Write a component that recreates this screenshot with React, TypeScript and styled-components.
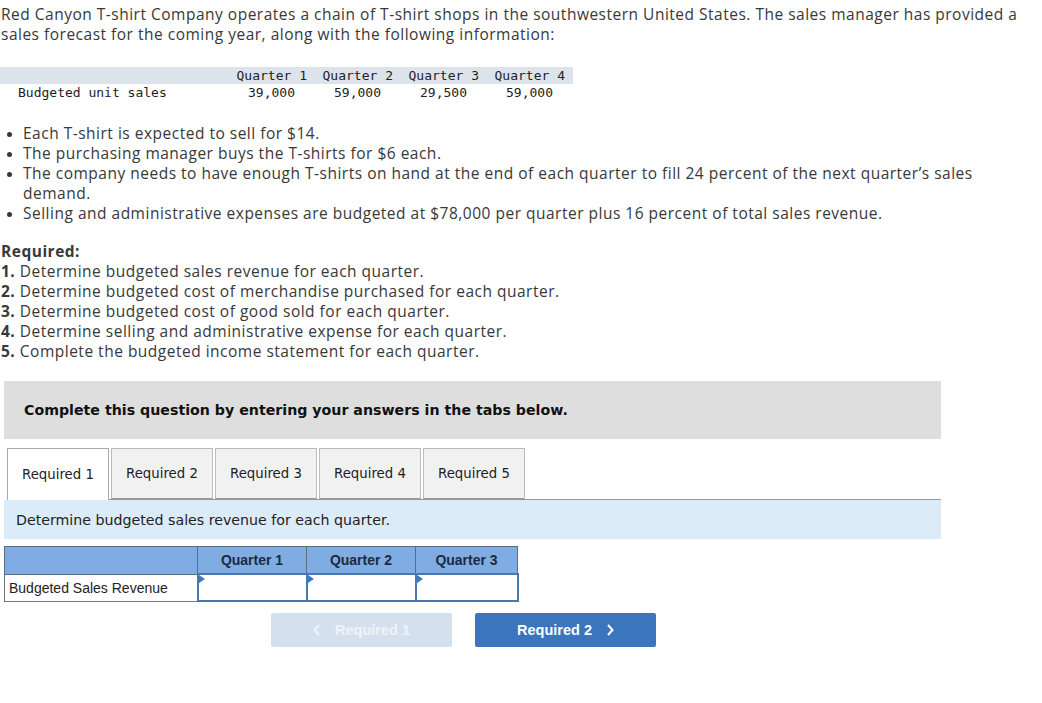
import React from "react";
import styled, { createGlobalStyle } from "styled-components";

const Global = createGlobalStyle`
  html, body { margin: 0; padding: 0; background: #fff; }
  body { font-family: "Open Sans", Lato, sans-serif; color: #333; }
`;

const Page = styled.div`
  width: 1042px;
  padding: 4px 0 0 0;
`;

const Body = styled.div`
  font-family: "Open Sans", sans-serif;
  font-size: 15.5px;
  letter-spacing: 0.5px;
  line-height: 20px;
  color: #383838;
  width: 1026px;
`;

const Intro = styled.p`
  margin: 0 0 0 1px;
`;

const DataTable = styled.table`
  margin-top: 23px;
  border-collapse: collapse;
  font-family: "DejaVu Sans Mono", monospace;
  font-size: 13px;
  letter-spacing: 0;
  color: #222;
`;

const HeadRow = styled.tr`
  background: #dde3ea;
`;

const Cell = styled.td<{ $w: number; $left?: boolean; $pr?: number }>`
  width: ${(p) => p.$w}px;
  padding: 0 ${(p) => p.$pr ?? 8}px 0 ${(p) => (p.$left ? 18 : 0)}px;
  height: 17px;
  line-height: 17px;
  text-align: ${(p) => (p.$left ? "left" : "right")};
  white-space: nowrap;
  box-sizing: border-box;
`;

const Bullets = styled.ul`
  margin: 22px 0 0 0;
  padding: 0 0 0 23px;
  li { margin: 0; }
  li::marker { font-size: 13px; }
`;

const Required = styled.div`
  margin-top: 18px;
  padding-left: 1px;
`;

const ReqTitle = styled.div`
  font-weight: 700;
`;

const ReqItem = styled.div`
  b { font-weight: 700; }
`;

const Instruction = styled.div`
  margin: 20px 0 0 4px;
  width: 937px;
  height: 58px;
  background: #dedede;
  display: flex;
  align-items: center;
  padding-left: 20px;
  box-sizing: border-box;
  font-family: "DejaVu Sans", Verdana, sans-serif;
  font-weight: 700;
  font-size: 14.2px;
  color: #111;
`;

const TabBar = styled.div`
  margin: 9px 0 0 7px;
  display: flex;
  width: 934px;
  border-bottom: 1px solid #999;
  height: 51px;
`;

const Tab = styled.div<{ $active?: boolean }>`
  width: 102px;
  height: ${(p) => (p.$active ? 52 : 51)}px;
  box-sizing: border-box;
  margin-right: 2px;
  display: flex;
  align-items: center;
  justify-content: center;
  font-family: "DejaVu Sans", Verdana, sans-serif;
  font-size: 13.3px;
  color: #222;
  border: 1px solid ${(p) => (p.$active ? "#aaa" : "#bbb")};
  border-bottom: ${(p) => (p.$active ? "none" : "1px solid #999")};
  background: ${(p) => (p.$active ? "#fff" : "#f1f1f1")};
  margin-bottom: ${(p) => (p.$active ? -1 : 0)}px;
`;

const Prompt = styled.div`
  margin-left: 4px;
  width: 937px;
  height: 39px;
  background: #dcebf8;
  display: flex;
  align-items: center;
  padding-left: 12px;
  box-sizing: border-box;
  font-family: "DejaVu Sans", Verdana, sans-serif;
  font-size: 14.2px;
  color: #222;
`;

const AnswerTable = styled.table`
  margin: 7px 0 0 4px;
  border-collapse: collapse;
  font-family: "Liberation Sans", Arial, sans-serif;
  font-size: 14px;
  color: #222;
`;

const AHead = styled.th<{ $w: number }>`
  width: ${(p) => p.$w}px;
  height: 26px;
  background: #7fade3;
  border: 1px solid #5d6d80;
  font-weight: 700;
  color: #1b2a40;
  padding: 0;
`;

const ALabel = styled.td`
  height: 26px;
  border: 1px solid #777;
  padding: 0 4px;
  text-align: left;
`;

const AInputCell = styled.td`
  border: 2px solid #4a77b0;
  padding: 0;
  position: relative;
  background: #fff;
`;

const Marker = styled.span`
  position: absolute;
  top: 0;
  left: 0;
  width: 0;
  height: 0;
  border-top: 4px solid transparent;
  border-bottom: 4px solid transparent;
  border-left: 6px solid #3a78c3;
`;

const NavRow = styled.div`
  margin: 11px 0 0 271px;
  display: flex;
  gap: 23px;
`;

const NavButton = styled.div<{ $primary?: boolean }>`
  width: 181px;
  height: 34px;
  border-radius: 2px;
  display: flex;
  align-items: center;
  justify-content: center;
  gap: 14px;
  font-family: "Liberation Sans", Arial, sans-serif;
  font-weight: 700;
  font-size: 14.5px;
  color: ${(p) => (p.$primary ? "#fff" : "#eef3f9")};
  background: ${(p) => (p.$primary ? "#3a75bd" : "#d5e0ef")};
  svg { display: block; }
`;

const Chevron = ({ dir }: { dir: "l" | "r" }) => (
  <svg width="8" height="12" viewBox="0 0 8 12">
    <path
      d={dir === "l" ? "M6 1 L1.5 6 L6 11" : "M2 1 L6.5 6 L2 11"}
      fill="none"
      stroke="currentColor"
      strokeWidth="2"
    />
  </svg>
);

export default function App() {
  const quarters = ["Quarter 1", "Quarter 2", "Quarter 3", "Quarter 4"];
  const units = ["39,000", "59,000", "29,500", "59,000"];
  return (
    <Page>
      <Global />
      <Body>
        <Intro>
          Red Canyon T-shirt Company operates a chain of T-shirt shops in the southwestern United States. The sales
          manager has provided a sales forecast for the coming year, along with the following information:
        </Intro>
        <DataTable>
          <tbody>
            <HeadRow>
              <Cell $w={229} $left />
              {quarters.map((q) => (
                <Cell key={q} $w={86}>
                  {q}
                </Cell>
              ))}
            </HeadRow>
            <tr>
              <Cell $w={229} $left>
                Budgeted unit sales
              </Cell>
              {units.map((u, i) => (
                <Cell key={i} $w={86} $pr={20}>
                  {u}
                </Cell>
              ))}
            </tr>
          </tbody>
        </DataTable>
        <Bullets>
          <li>Each T-shirt is expected to sell for $14.</li>
          <li>The purchasing manager buys the T-shirts for $6 each.</li>
          <li>
            The company needs to have enough T-shirts on hand at the end of each quarter to fill 24 percent of the
            next quarter’s sales demand.
          </li>
          <li>
            Selling and administrative expenses are budgeted at $78,000 per quarter plus 16 percent of total sales
            revenue.
          </li>
        </Bullets>
        <Required>
          <ReqTitle>Required:</ReqTitle>
          <ReqItem>
            <b>1.</b> Determine budgeted sales revenue for each quarter.
          </ReqItem>
          <ReqItem>
            <b>2.</b> Determine budgeted cost of merchandise purchased for each quarter.
          </ReqItem>
          <ReqItem>
            <b>3.</b> Determine budgeted cost of good sold for each quarter.
          </ReqItem>
          <ReqItem>
            <b>4.</b> Determine selling and administrative expense for each quarter.
          </ReqItem>
          <ReqItem>
            <b>5.</b> Complete the budgeted income statement for each quarter.
          </ReqItem>
        </Required>
      </Body>
      <Instruction>Complete this question by entering your answers in the tabs below.</Instruction>
      <TabBar>
        {[1, 2, 3, 4, 5].map((n) => (
          <Tab key={n} $active={n === 1}>
            Required {n}
          </Tab>
        ))}
      </TabBar>
      <Prompt>Determine budgeted sales revenue for each quarter.</Prompt>
      <AnswerTable>
        <thead>
          <tr>
            <AHead $w={192} />
            <AHead $w={108}>Quarter 1</AHead>
            <AHead $w={108}>Quarter 2</AHead>
            <AHead $w={101}>Quarter 3</AHead>
          </tr>
        </thead>
        <tbody>
          <tr>
            <ALabel>Budgeted Sales Revenue</ALabel>
            <AInputCell>
              <Marker />
            </AInputCell>
            <AInputCell>
              <Marker />
            </AInputCell>
            <AInputCell>
              <Marker />
            </AInputCell>
          </tr>
        </tbody>
      </AnswerTable>
      <NavRow>
        <NavButton>
          <Chevron dir="l" />
          Required 1
        </NavButton>
        <NavButton $primary>
          Required 2
          <Chevron dir="r" />
        </NavButton>
      </NavRow>
    </Page>
  );
}
